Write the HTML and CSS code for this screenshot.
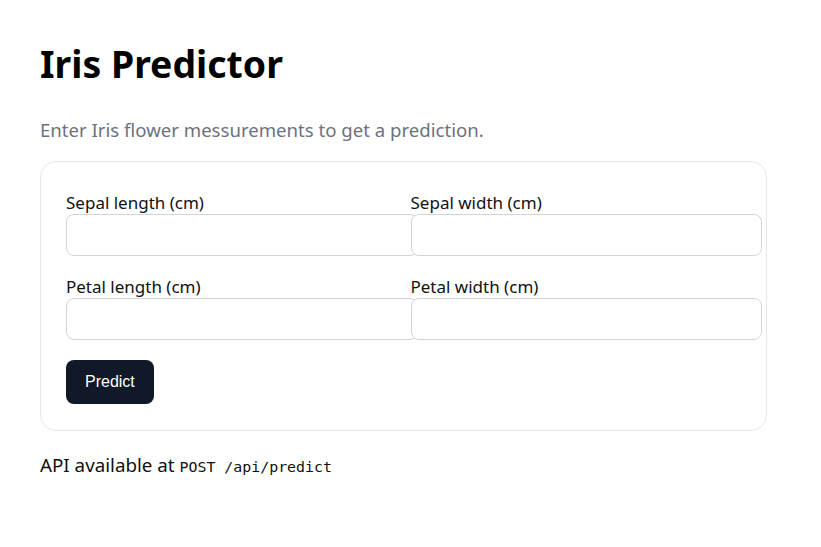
FILE: index.html
```html
<!DOCTYPE html>
<html lang="en">
<head>
<meta charset="utf-8">
<title>Iris Predictor</title>
<link rel="stylesheet" href="styles.css">
</head>
<body>
<main class="page">
  <h1 class="title">Iris Predictor</h1>
  <p class="subtitle">Enter Iris flower messurements to get a prediction.</p>
  <form class="card">
    <div class="grid">
      <div class="field">
        <label class="label" for="sl">Sepal length (cm)</label>
        <input class="input" id="sl" type="text">
      </div>
      <div class="field">
        <label class="label" for="sw">Sepal width (cm)</label>
        <input class="input" id="sw" type="text">
      </div>
      <div class="field">
        <label class="label" for="pl">Petal length (cm)</label>
        <input class="input" id="pl" type="text">
      </div>
      <div class="field">
        <label class="label" for="pw">Petal width (cm)</label>
        <input class="input" id="pw" type="text">
      </div>
    </div>
    <button class="button" type="button">Predict</button>
  </form>
  <p class="api">API available at <code class="code">POST /api/predict</code></p>
</main>
</body>
</html>
```
FILE: styles.css
```css
* { margin: 0; }
body {
  margin: 0;
  background: #ffffff;
  color: #111111;
  font-family: "Noto Sans", "Open Sans", sans-serif;
}
.page {
  padding: 40px;
  width: 727px;
}
.title {
  font-size: 37.4px;
  font-weight: 700;
  line-height: 48px;
  color: #000;
  margin-top: 0;
}
.subtitle {
  margin-top: 28px;
  font-size: 18.6px;
  line-height: 28px;
  color: #6b7280;
}
.card {
  margin-top: 17px;
  border: 1px solid #e5e7eb;
  border-radius: 16px;
  padding: 24px 26px 26px 25px;
  display: flex;
  flex-direction: column;
  align-items: flex-start;
}
.grid {
  display: grid;
  grid-template-columns: 1fr 1fr;
  column-gap: 15px;
  row-gap: 14px;
  width: 100%;
}
.field {
  display: flex;
  flex-direction: column;
}
.label {
  font-size: 17px;
  line-height: 22px;
  padding-top: 6px;
  color: #111;
}
.input {
  width: 100%;
  box-sizing: content-box;
  padding: 10px;
  height: 20px;
  border: 1px solid #d1d5db;
  border-radius: 8px;
  background: #fff;
  font: inherit;
}
.button {
  margin-top: 20px;
  background: #111827;
  color: #fff;
  border: 0;
  border-radius: 8px;
  height: 44px;
  padding: 0 19px;
  font-family: "Liberation Sans", Arial, sans-serif;
  font-size: 16px;
}
.api {
  margin-top: 20px;
  font-size: 18.8px;
  line-height: 28px;
  color: #111;
}
.code {
  font-family: "DejaVu Sans Mono", monospace;
  font-size: 14.9px;
}
```
